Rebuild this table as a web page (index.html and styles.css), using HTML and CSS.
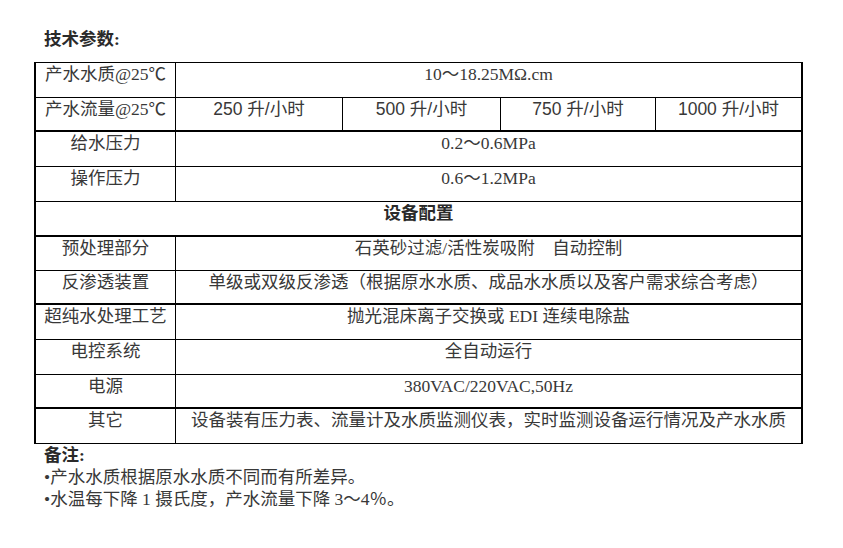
FILE: index.html
```html
<!DOCTYPE html>
<html lang="zh-CN">
<head>
<meta charset="utf-8">
<title>技术参数</title>
<link rel="stylesheet" href="styles.css">
</head>
<body>
<div class="page">
  <h2 class="title">技术参数:</h2>
  <div class="spec">
    <div class="row r35">
      <div class="label">产水水质@25℃</div>
      <div class="value">10～18.25MΩ.cm</div>
    </div>
    <div class="row r34 thick">
      <div class="label">产水流量@25℃</div>
      <div class="value split">
        <div class="sub">250 升/小时</div>
        <div class="sub">500 升/小时</div>
        <div class="sub">750 升/小时</div>
        <div class="sub">1000 升/小时</div>
      </div>
    </div>
    <div class="row r35">
      <div class="label">给水压力</div>
      <div class="value">0.2～0.6MPa</div>
    </div>
    <div class="row r35">
      <div class="label">操作压力</div>
      <div class="value">0.6～1.2MPa</div>
    </div>
    <div class="row r35 thick">
      <div class="section">设备配置</div>
    </div>
    <div class="row r34">
      <div class="label">预处理部分</div>
      <div class="value">石英砂过滤/活性炭吸附　自动控制</div>
    </div>
    <div class="row r34 thick">
      <div class="label">反渗透装置</div>
      <div class="value">单级或双级反渗透（根据原水水质、成品水水质以及客户需求综合考虑）</div>
    </div>
    <div class="row r35">
      <div class="label">超纯水处理工艺</div>
      <div class="value">抛光混床离子交换或 EDI 连续电除盐</div>
    </div>
    <div class="row r35">
      <div class="label">电控系统</div>
      <div class="value">全自动运行</div>
    </div>
    <div class="row r34 thick">
      <div class="label">电源</div>
      <div class="value">380VAC/220VAC,50Hz</div>
    </div>
    <div class="row r35">
      <div class="label">其它</div>
      <div class="value">设备装有压力表、流量计及水质监测仪表，实时监测设备运行情况及产水水质</div>
    </div>
  </div>
  <div class="notes">
    <div class="notes-title">备注:</div>
    <div class="note">•产水水质根据原水水质不同而有所差异。</div>
    <div class="note">•水温每下降 1 摄氏度，产水流量下降 3～4％。</div>
  </div>
</div>
</body>
</html>
```

FILE: styles.css
```css
html, body {
  margin: 0;
  padding: 0;
  background: #ffffff;
}

body {
  font-family: "Liberation Serif", "Noto Sans CJK SC", serif;
  font-size: 17.5px;
  color: #383838;
}

.page {
  padding-top: 27px;
}

.title {
  margin: 0 0 11px 44px;
  font-size: 17.5px;
  line-height: 24px;
  font-weight: bold;
  color: #2a2a2a;
}

.spec {
  margin-left: 34px;
  width: 769px;
  box-sizing: border-box;
  border-top: 1px solid #000;
  border-left: 2px solid #000;
  border-right: 2px solid #000;
  display: flex;
  flex-direction: column;
}

.row {
  display: grid;
  grid-template-columns: 140px 1fr;
  box-sizing: border-box;
  border-bottom: 1px solid #000;
  line-height: 22px;
}

.row.r35 { height: 35px; }
.row.r34 { height: 34px; }
.row.thick { border-bottom-width: 2px; }

.label {
  border-right: 1px solid #000;
  text-align: center;
  white-space: nowrap;
}

.value {
  text-align: center;
  white-space: nowrap;
}

.value.split {
  display: grid;
  grid-template-columns: 166px 158px 155px 1fr;
  font-family: "Liberation Sans", "Noto Sans CJK SC", sans-serif;
}

.sub {
  text-align: center;
}

.sub + .sub {
  border-left: 1px solid #000;
}

.section {
  grid-column: 1 / -1;
  text-align: center;
  font-weight: bold;
  color: #2a2a2a;
}

.notes {
  margin-left: 44px;
  line-height: 22px;
}

.notes-title {
  font-weight: bold;
  color: #2a2a2a;
}

.note {
  margin-top: 0;
}
```
